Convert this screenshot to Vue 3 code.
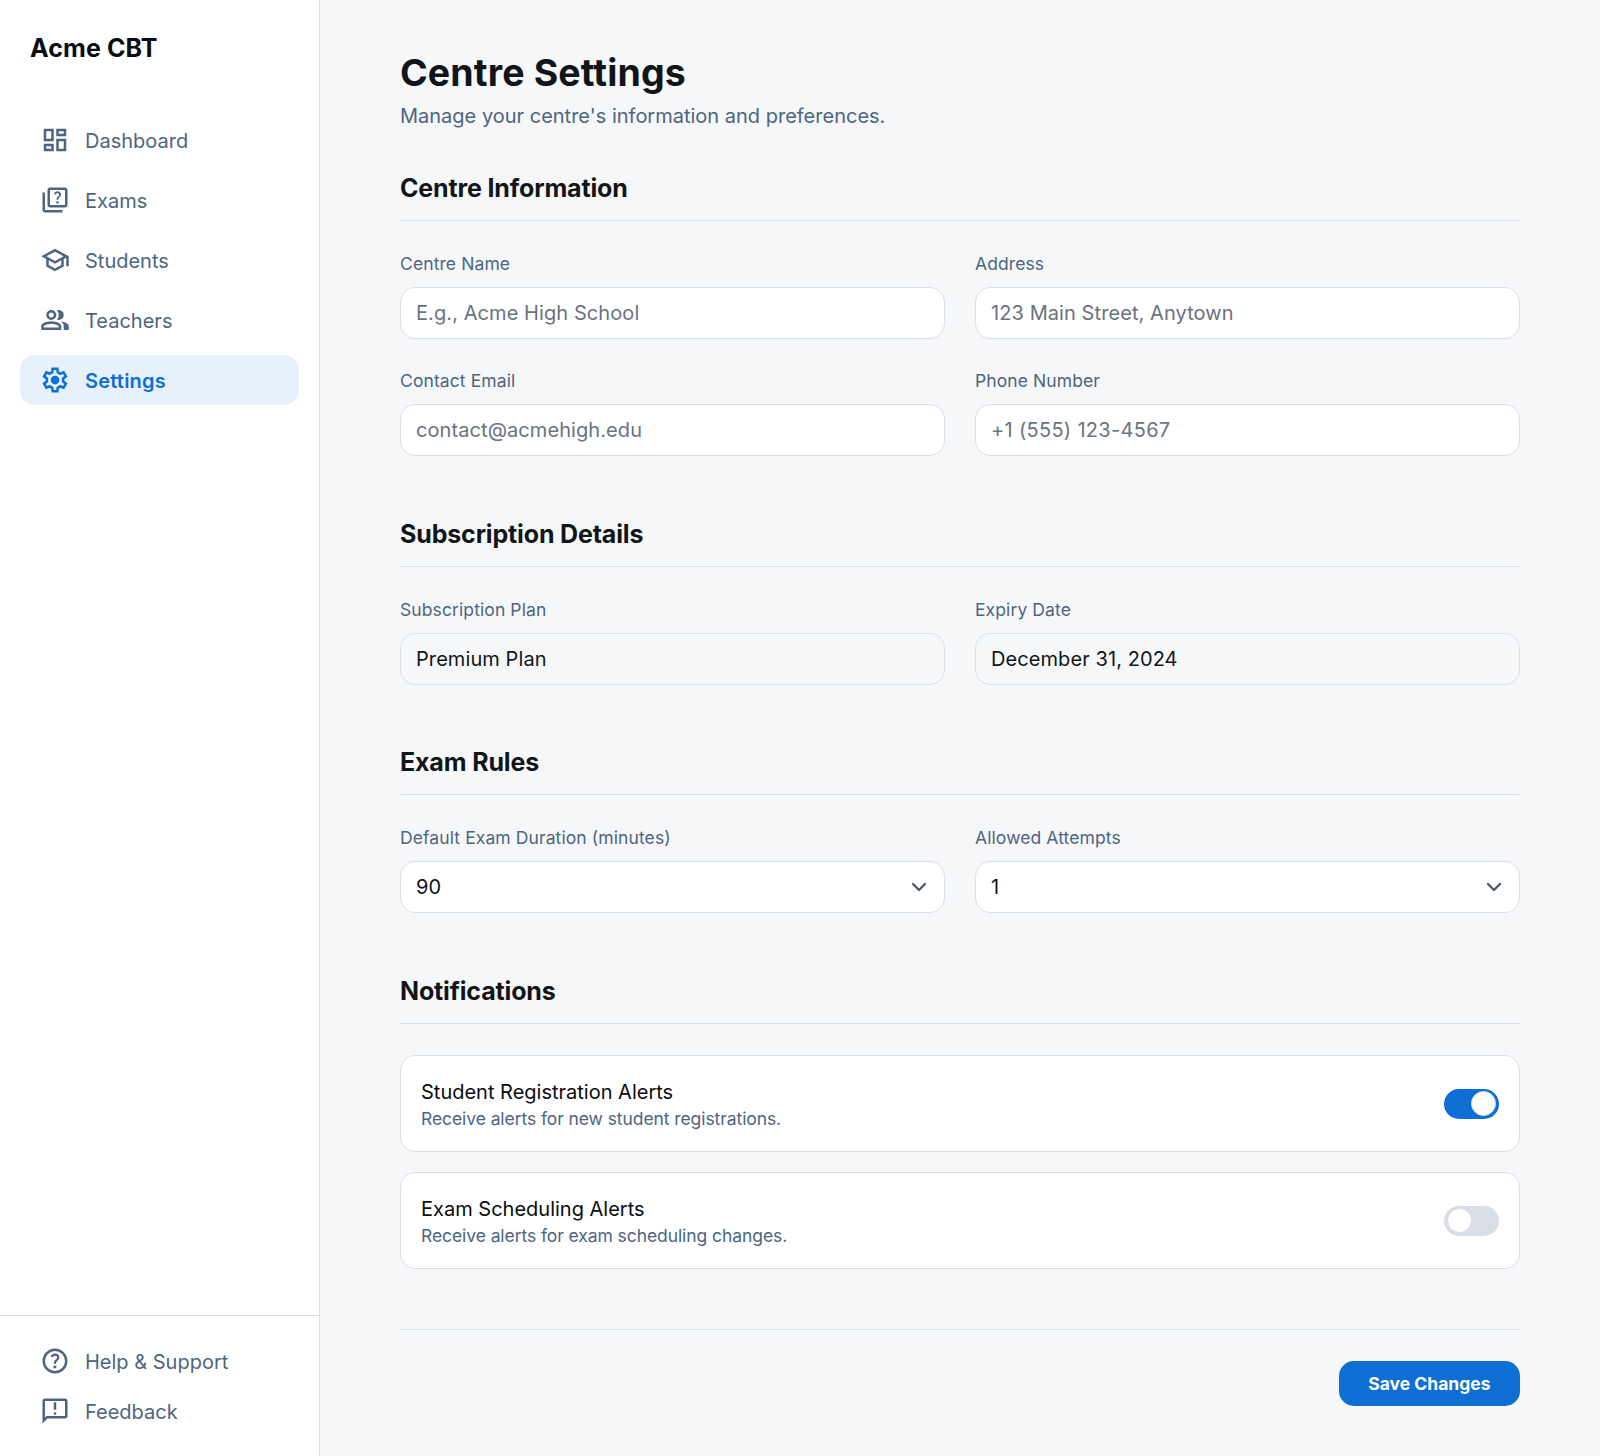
<script setup>
import { ref } from 'vue';

// Material Symbols outlines, viewBox 0 -960 960 960
const icons = {
  dashboard: 'M520-600v-240h320v240H520ZM120-440v-400h320v400H120Zm400 320v-400h320v400H520Zm-400 0v-240h320v240H120Zm80-400h160v-240H200v240Zm400 320h160v-240H600v240Zm0-480h160v-80H600v80ZM200-200h160v-80H200v80Zm160-320Zm240-80Zm0 240Zm-240 80Z',
  quiz: 'M560-360q17 0 29.5-12.5T602-402q0-17-12.5-29.5T560-444q-17 0-29.5 12.5T518-402q0 17 12.5 29.5T560-360Zm-30-128h60q0-29 6-42.5t28-35.5q30-30 40-48.5t10-43.5q0-45-31.5-73.5T560-760q-41 0-71.5 23T446-676l54 22q9-25 24.5-37.5T560-704q24 0 39 13.5t15 36.5q0 14-8 26.5T578-596q-33 29-40.5 45.5T530-488ZM320-240q-33 0-56.5-23.5T240-320v-480q0-33 23.5-56.5T320-880h480q33 0 56.5 23.5T880-800v480q0 33-23.5 56.5T800-240H320Zm0-80h480v-480H320v480ZM160-80q-33 0-56.5-23.5T80-160v-560h80v560h560v80H160Zm160-720v480-480Z',
  school: 'M480-120 200-272v-240L40-600l440-240 440 240v320h-80v-276l-80 44v240L480-120Zm0-332 274-148-274-148-274 148 274 148Zm0 241 200-108v-151L480-360 280-470v151l200 108Zm0-241Zm0 60Zm0 0Z',
  group: 'M40-160v-112q0-34 17.5-62.5T104-377q62-31 126-46.5T360-439q66 0 130 15.5T616-377q29 15 46.5 43.5T680-272v112H40Zm720 0v-120q0-44-24.5-84.5T666-434q51 6 96 20.5t84 35.5q36 20 55 44.5t19 53.5v120H760ZM360-480q-66 0-113-47t-47-113q0-66 47-113t113-47q66 0 113 47t47 113q0 66-47 113t-113 47Zm400-160q0 66-47 113t-113 47q-11 0-28-2.5t-28-5.5q27-32 41.5-71t14.5-81q0-42-14.5-81T544-792q14-5 28-6.5t28-1.5q66 0 113 47t47 113ZM120-240h480v-32q0-11-5.5-20T580-306q-54-27-109-40.5T360-360q-56 0-111 13.5T140-306q-9 5-14.5 14t-5.5 20v32Zm240-320q33 0 56.5-23.5T440-640q0-33-23.5-56.5T360-720q-33 0-56.5 23.5T280-640q0 33 23.5 56.5T360-560Zm0 260Zm0-340Z',
  settings: 'm370-80-16-128q-13-5-24.5-12T307-235l-119 50L78-375l103-78q-1-7-1-13.5v-27q0-6.5 1-13.5L78-585l110-190 119 50q11-8 23-15t24-12l16-128h220l16 128q13 5 24.5 12t22.5 15l119-50 110 190-103 78q1 7 1 13.5v27q0 6.5-2 13.5l103 78-110 190-118-50q-11 8-23 15t-24 12L590-80H370Zm70-80h79l14-106q31-8 57.5-23.5T639-327l99 41 39-68-86-65q5-14 7-29.5t2-31.5q0-16-2-31.5t-7-29.5l86-65-39-68-99 42q-22-23-48.5-38.5T533-694l-13-106h-79l-14 106q-31 8-57.5 23.5T321-633l-99-41-39 68 86 64q-5 15-7 30t-2 32q0 16 2 31t7 30l-86 65 39 68 99-42q22 23 48.5 38.5T427-266l13 106Zm42-180q58 0 99-41t41-99q0-58-41-99t-99-41q-59 0-99.5 41T342-480q0 58 40.5 99t99.5 41Zm-2-140Z',
  help: 'M478-240q21 0 35.5-14.5T528-290q0-21-14.5-35.5T478-340q-21 0-35.5 14.5T428-290q0 21 14.5 35.5T478-240Zm-36-154h74q0-33 7.5-52t42.5-52q26-26 41-49.5t15-56.5q0-56-41-86t-97-30q-57 0-92.5 30T342-618l66 26q5-18 22.5-39t53.5-21q32 0 48 17.5t16 38.5q0 20-12 37.5T506-526q-44 39-54 59t-10 73Zm38 314q-83 0-156-31.5T197-197q-54-54-85.5-127T80-480q0-83 31.5-156T197-763q54-54 127-85.5T480-880q83 0 156 31.5T763-763q54 54 85.5 127T880-480q0 83-31.5 156T763-197q-54 54-127 85.5T480-80Zm0-80q134 0 227-93t93-227q0-134-93-227t-227-93q-134 0-227 93t-93 227q0 134 93 227t227 93Zm0-320Z',
  feedback: 'M480-360q17 0 28.5-11.5T520-400q0-17-11.5-28.5T480-440q-17 0-28.5 11.5T440-400q0 17 11.5 28.5T480-360Zm-40-160h80v-240h-80v240ZM80-80v-720q0-33 23.5-56.5T160-880h640q33 0 56.5 23.5T880-800v480q0 33-23.5 56.5T800-240H240L80-80Zm126-240h594v-480H160v525l46-45Zm-46 0v-480 480Z',
};

const navItems = [
  { label: 'Dashboard', icon: 'dashboard' },
  { label: 'Exams', icon: 'quiz' },
  { label: 'Students', icon: 'school' },
  { label: 'Teachers', icon: 'group' },
  { label: 'Settings', icon: 'settings', active: true },
];

const footerItems = [
  { label: 'Help & Support', icon: 'help' },
  { label: 'Feedback', icon: 'feedback' },
];

const centreName = ref('');
const address = ref('');
const email = ref('');
const phone = ref('');
const duration = ref('90');
const attempts = ref('1');

const notifications = ref([
  { title: 'Student Registration Alerts', text: 'Receive alerts for new student registrations.', on: true },
  { title: 'Exam Scheduling Alerts', text: 'Receive alerts for exam scheduling changes.', on: false },
]);
</script>

<template>
  <div class="layout">
    <aside class="sidebar">
      <div class="logo">Acme CBT</div>
      <nav class="nav">
        <a v-for="item in navItems" :key="item.label" href="#" class="nav-item" :class="{ active: item.active }">
          <svg class="nav-icon" viewBox="0 -960 960 960" fill="currentColor"><path :d="icons[item.icon]" /></svg>
          <span>{{ item.label }}</span>
        </a>
      </nav>
      <div class="sidebar-footer">
        <a v-for="item in footerItems" :key="item.label" href="#" class="nav-item">
          <svg class="nav-icon" viewBox="0 -960 960 960" fill="currentColor"><path :d="icons[item.icon]" /></svg>
          <span>{{ item.label }}</span>
        </a>
      </div>
    </aside>

    <main class="main">
      <h1>Centre Settings</h1>
      <p class="subtitle">Manage your centre's information and preferences.</p>

      <section class="section">
        <h2>Centre Information</h2>
        <div class="form-grid">
          <label class="field">
            <span class="field-label">Centre Name</span>
            <input v-model="centreName" placeholder="E.g., Acme High School" />
          </label>
          <label class="field">
            <span class="field-label">Address</span>
            <input v-model="address" placeholder="123 Main Street, Anytown" />
          </label>
          <label class="field">
            <span class="field-label">Contact Email</span>
            <input v-model="email" placeholder="contact@acmehigh.edu" />
          </label>
          <label class="field">
            <span class="field-label">Phone Number</span>
            <input v-model="phone" class="phone" placeholder="+1 (555) 123-4567" />
          </label>
        </div>
      </section>

      <section class="section">
        <h2>Subscription Details</h2>
        <div class="form-grid">
          <label class="field">
            <span class="field-label">Subscription Plan</span>
            <input class="readonly" value="Premium Plan" readonly />
          </label>
          <label class="field">
            <span class="field-label">Expiry Date</span>
            <input class="readonly" value="December 31, 2024" readonly />
          </label>
        </div>
      </section>

      <section class="section">
        <h2>Exam Rules</h2>
        <div class="form-grid">
          <label class="field">
            <span class="field-label">Default Exam Duration (minutes)</span>
            <span class="select-wrap">
              <select v-model="duration">
                <option>60</option>
                <option>90</option>
                <option>120</option>
              </select>
              <svg class="chevron" viewBox="0 0 20 20" fill="none" stroke="currentColor" stroke-width="1.9" stroke-linecap="round" stroke-linejoin="round"><path d="M5 7.5l5 5 5-5" /></svg>
            </span>
          </label>
          <label class="field">
            <span class="field-label">Allowed Attempts</span>
            <span class="select-wrap">
              <select v-model="attempts">
                <option>1</option>
                <option>2</option>
                <option>3</option>
              </select>
              <svg class="chevron" viewBox="0 0 20 20" fill="none" stroke="currentColor" stroke-width="1.9" stroke-linecap="round" stroke-linejoin="round"><path d="M5 7.5l5 5 5-5" /></svg>
            </span>
          </label>
        </div>
      </section>

      <section class="section">
        <h2>Notifications</h2>
        <div class="alerts">
          <div v-for="item in notifications" :key="item.title" class="alert-card">
            <div>
              <p class="alert-title">{{ item.title }}</p>
              <p class="alert-text">{{ item.text }}</p>
            </div>
            <button class="toggle" :class="{ on: item.on }" @click="item.on = !item.on">
              <span class="knob"></span>
            </button>
          </div>
        </div>
      </section>

      <div class="actions">
        <button class="save">Save Changes</button>
      </div>
    </main>
  </div>
</template>

<style scoped>
.layout {
  display: flex;
  min-height: 1456px;
  font-family: Inter, "Liberation Sans", sans-serif;
  color: #111518;
  background: #f6f7f9;
}

.sidebar {
  width: 320px;
  box-sizing: border-box;
  flex-shrink: 0;
  display: flex;
  flex-direction: column;
  background: #fff;
  border-right: 1px solid #d9dfe8;
}

.logo {
  padding: 30px 30px 0;
  font-size: 25px;
  font-weight: 700;
  line-height: 36px;
  letter-spacing: 0.1px;
  color: #0a0c0e;
}

.nav {
  flex: 1;
  display: flex;
  flex-direction: column;
  gap: 10px;
  padding: 49px 20px 0;
}

.nav-item {
  display: flex;
  align-items: center;
  gap: 15px;
  height: 50px;
  padding: 0 20px;
  border-radius: 15px;
  font-size: 20px;
  color: #4d6580;
  text-decoration: none;
}

.nav-item span {
  padding-top: 1px;
}

.nav-item.active {
  background: #e7f1fb;
  color: #0d6fd3;
  font-weight: 600;
  letter-spacing: 0.2px;
}

.nav-icon {
  width: 30px;
  height: 30px;
  flex-shrink: 0;
}

.sidebar-footer {
  padding: 20px;
  border-top: 1px solid #d9dfe8;
}

.main {
  flex: 1;
  padding: 50px 80px 49px;
}

h1 {
  margin: 0;
  font-size: 37.5px;
  line-height: 45px;
  font-weight: 700;
  letter-spacing: 0.13px;
  color: #111518;
}

.subtitle {
  margin: 6px 0 0;
  font-size: 20px;
  line-height: 30px;
  color: #4d6580;
}

.section {
  margin-top: 61.5px;
}

.section:first-of-type {
  margin-top: 41px;
}

h2 {
  margin: 0 0 30px;
  padding-bottom: 16px;
  border-bottom: 1px solid #d9dfe8;
  font-size: 25px;
  line-height: 32px;
  font-weight: 700;
  letter-spacing: -0.15px;
  color: #111518;
}

.form-grid {
  display: grid;
  grid-template-columns: 1fr 1fr;
  gap: 29px 30px;
}

.field {
  display: flex;
  flex-direction: column;
  gap: 11px;
}

.field-label {
  font-size: 17.5px;
  line-height: 25px;
  font-weight: 400;
  letter-spacing: 0.1px;
  color: #4d6580;
}

input,
select {
  width: 100%;
  height: 52px;
  box-sizing: border-box;
  padding: 0 15px;
  border: 1px solid #d9dfe8;
  border-radius: 15px;
  outline: none;
  background: #fff;
  font-family: inherit;
  font-size: 20px;
  letter-spacing: 0.08px;
  color: #111518;
  appearance: none;
}

input.phone {
  letter-spacing: 0.3px;
}

input::placeholder {
  color: #6b7280;
  opacity: 1;
}

input.readonly {
  background: #f6f7f9;
}

.select-wrap {
  position: relative;
  display: block;
}

.chevron {
  position: absolute;
  top: 14px;
  right: 14px;
  width: 24px;
  height: 24px;
  color: #4b5563;
  pointer-events: none;
}

.alerts {
  display: flex;
  flex-direction: column;
  gap: 20px;
  margin-top: 31.5px;
}

.alert-card {
  display: flex;
  align-items: center;
  justify-content: space-between;
  padding: 20px;
  border: 1px solid #d9dfe8;
  border-radius: 15px;
  background: #fff;
}

.alert-title {
  margin: 0;
  padding-top: 2px;
  font-size: 20px;
  line-height: 28px;
  font-weight: 400;
  color: #0a0c0e;
}

.alert-text {
  margin: 0;
  font-size: 17.5px;
  line-height: 25px;
  letter-spacing: -0.08px;
  color: #4d6580;
}

.toggle {
  position: relative;
  width: 55px;
  height: 30px;
  padding: 0;
  border: 0;
  border-radius: 15px;
  background: #d9dee6;
}

.toggle.on {
  background: #0d6fd3;
}

.knob {
  position: absolute;
  top: 2.5px;
  left: 3px;
  width: 25px;
  height: 25px;
  box-sizing: border-box;
  border: 1px solid #d9dee6;
  border-radius: 50%;
  background: #fff;
}

.toggle.on .knob {
  left: 27px;
}

.actions {
  display: flex;
  justify-content: flex-end;
  margin-top: 60px;
  padding-top: 30.5px;
  border-top: 1px solid #d9dfe8;
}

.save {
  height: 45px;
  padding: 0 29.5px;
  border: 0;
  border-radius: 15px;
  background: #0d6fd3;
  font-family: inherit;
  font-size: 17.5px;
  font-weight: 700;
  color: #fff;
}
</style>
